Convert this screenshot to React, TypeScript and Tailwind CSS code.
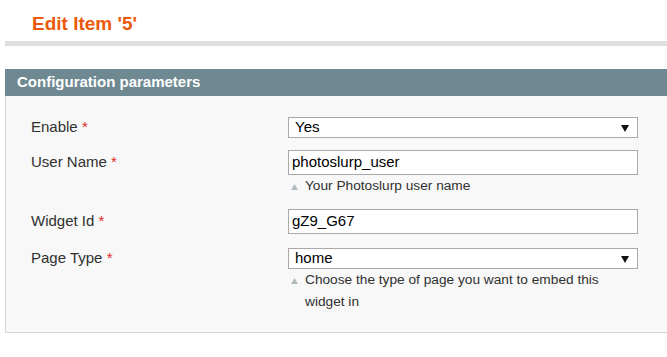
import React from "react";

function Arrow() {
  return (
    <svg width="8" height="7" viewBox="0 0 8 7" className="shrink-0">
      <polygon points="0,0 8,0 4,7" fill="#111" />
    </svg>
  );
}

function HintTri() {
  return (
    <svg width="7" height="6" viewBox="0 0 7 6" className="shrink-0">
      <polygon points="3.5,0 7,6 0,6" fill="#b3bcc0" />
    </svg>
  );
}

function Label({ text, h }: { text: string; h: string }) {
  return (
    <div className={`w-[257px] shrink-0 flex items-center text-[15px] text-[#303030] ${h}`}>
      <span>
        {text} <span className="text-[#e02b27]">*</span>
      </span>
    </div>
  );
}

function Hint({ children }: { children: React.ReactNode }) {
  return (
    <div className="flex pl-[3px] text-[13.7px] leading-[22px] text-[#303030]">
      <div className="h-[22px] flex items-center pt-[2px]">
        <HintTri />
      </div>
      <div className="pl-[7px]">{children}</div>
    </div>
  );
}

function Select({ value }: { value: string }) {
  return (
    <div className="h-[21px] bg-white border border-[#a9a9a9] flex items-center justify-between pl-[6px] pr-[8px] text-[15px] text-black">
      <span>{value}</span>
      <span className="pt-[1px] flex items-center">
        <Arrow />
      </span>
    </div>
  );
}

function Input({ value }: { value: string }) {
  return (
    <div className="h-[25px] bg-white border border-[#a9a9a9] flex items-center pl-[3px] text-[15px] text-black">
      {value}
    </div>
  );
}

export default function App() {
  return (
    <div className="w-[667px] h-[357px] bg-white font-['Liberation_Sans',Arial,sans-serif] overflow-hidden">
      <div className="pl-[32px] pt-[13px]">
        <h1 className="text-[19px] leading-[22px] font-bold text-[#eb5a0a]">Edit Item '5'</h1>
      </div>
      <div className="ml-[5px] mt-[6px] h-[5px] bg-[#dfdfdf]" />
      <div className="ml-[5px] mt-[23px] h-[27px] bg-[#6f8992] pl-[12px] text-[15px] leading-[25px] font-bold text-white">
        Configuration parameters
      </div>
      <div className="ml-[5px] bg-[#f8f8f8] border-l border-b border-[#d6d6d6] pl-[25px] pt-[21px] pb-[19px]">
        <div className="flex">
          <Label text="Enable" h="h-[21px]" />
          <div className="w-[350px]">
            <Select value="Yes" />
          </div>
        </div>
        <div className="flex mt-[12px]">
          <Label text="User Name" h="h-[25px]" />
          <div className="w-[350px]">
            <Input value="photoslurp_user" />
            <Hint>Your Photoslurp user name</Hint>
          </div>
        </div>
        <div className="flex mt-[12px]">
          <Label text="Widget Id" h="h-[25px]" />
          <div className="w-[350px]">
            <Input value="gZ9_G67" />
          </div>
        </div>
        <div className="flex mt-[14px]">
          <Label text="Page Type" h="h-[21px]" />
          <div className="w-[350px]">
            <Select value="home" />
            <Hint>Choose the type of page you want to embed this widget in</Hint>
          </div>
        </div>
      </div>
    </div>
  );
}
